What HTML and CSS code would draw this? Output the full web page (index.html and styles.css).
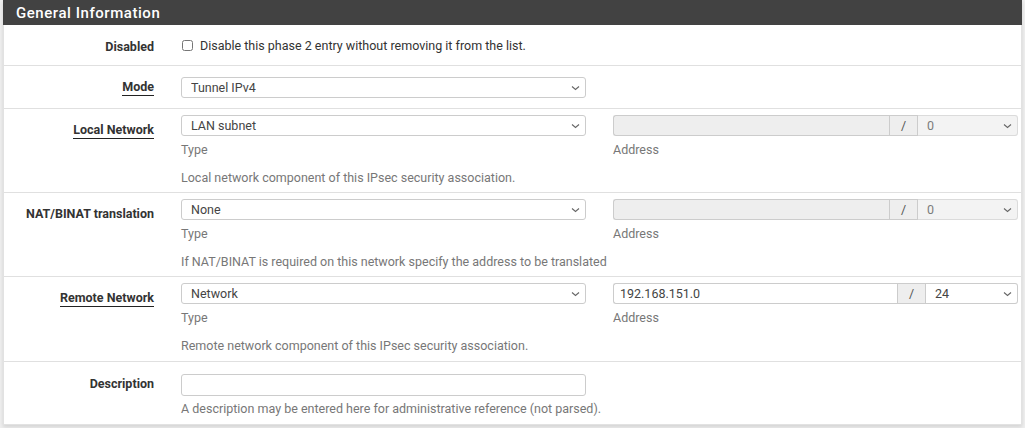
FILE: index.html
```html
<!DOCTYPE html>
<html lang="en">
<head>
    <meta charset="UTF-8">
    <meta name="viewport" content="width=device-width, initial-scale=1.0">
    <title>IPsec Phase 2</title>
    <link rel="stylesheet" href="styles.css">
</head>
<body>
    <div class="panel">
        <div class="panel-heading">General Information</div>
        <div class="panel-body">
            <div class="form-group row-disabled">
                <div class="label-col"><span class="lbl">Disabled</span></div>
                <div class="field-col wide">
                    <label class="chk"><input type="checkbox"> Disable this phase 2 entry without removing it from the list.</label>
                </div>
            </div>

            <div class="form-group row-mode">
                <div class="label-col"><span class="lbl required">Mode</span></div>
                <div class="field-col">
                    <div class="sel">
                        <select class="form-control"><option>Tunnel IPv4</option></select>
                        <svg class="caret" width="9" height="6" viewBox="0 0 9 6"><path d="M1 1.5 L4.5 4.5 L8 1.5" fill="none" stroke="#666" stroke-width="1.1"/></svg>
                    </div>
                </div>
            </div>

            <div class="form-group net">
                <div class="label-col"><span class="lbl required">Local Network</span></div>
                <div class="field-col">
                    <div class="sel">
                        <select class="form-control"><option>LAN subnet</option></select>
                        <svg class="caret" width="9" height="6" viewBox="0 0 9 6"><path d="M1 1.5 L4.5 4.5 L8 1.5" fill="none" stroke="#666" stroke-width="1.1"/></svg>
                    </div>
                    <div class="help">Type</div>
                </div>
                <div class="field-col">
                    <div class="input-group">
                        <input class="form-control addr" type="text" disabled>
                        <span class="addon">/</span>
                        <div class="sel mask">
                            <select class="form-control" disabled><option>0</option></select>
                            <svg class="caret" width="9" height="6" viewBox="0 0 9 6"><path d="M1 1.5 L4.5 4.5 L8 1.5" fill="none" stroke="#666" stroke-width="1.1"/></svg>
                        </div>
                    </div>
                    <div class="help">Address</div>
                </div>
                <div class="help note">Local network component of this IPsec security association.</div>
            </div>

            <div class="form-group net">
                <div class="label-col"><span class="lbl">NAT/BINAT translation</span></div>
                <div class="field-col">
                    <div class="sel">
                        <select class="form-control"><option>None</option></select>
                        <svg class="caret" width="9" height="6" viewBox="0 0 9 6"><path d="M1 1.5 L4.5 4.5 L8 1.5" fill="none" stroke="#666" stroke-width="1.1"/></svg>
                    </div>
                    <div class="help">Type</div>
                </div>
                <div class="field-col">
                    <div class="input-group">
                        <input class="form-control addr" type="text" disabled>
                        <span class="addon">/</span>
                        <div class="sel mask">
                            <select class="form-control" disabled><option>0</option></select>
                            <svg class="caret" width="9" height="6" viewBox="0 0 9 6"><path d="M1 1.5 L4.5 4.5 L8 1.5" fill="none" stroke="#666" stroke-width="1.1"/></svg>
                        </div>
                    </div>
                    <div class="help">Address</div>
                </div>
                <div class="help note">If NAT/BINAT is required on this network specify the address to be translated</div>
            </div>

            <div class="form-group net remote">
                <div class="label-col"><span class="lbl required">Remote Network</span></div>
                <div class="field-col">
                    <div class="sel">
                        <select class="form-control"><option>Network</option></select>
                        <svg class="caret" width="9" height="6" viewBox="0 0 9 6"><path d="M1 1.5 L4.5 4.5 L8 1.5" fill="none" stroke="#666" stroke-width="1.1"/></svg>
                    </div>
                    <div class="help">Type</div>
                </div>
                <div class="field-col">
                    <div class="input-group">
                        <input class="form-control addr" type="text" value="192.168.151.0">
                        <span class="addon">/</span>
                        <div class="sel mask narrow">
                            <select class="form-control"><option>24</option></select>
                            <svg class="caret" width="9" height="6" viewBox="0 0 9 6"><path d="M1 1.5 L4.5 4.5 L8 1.5" fill="none" stroke="#666" stroke-width="1.1"/></svg>
                        </div>
                    </div>
                    <div class="help">Address</div>
                </div>
                <div class="help note">Remote network component of this IPsec security association.</div>
            </div>

            <div class="form-group last">
                <div class="label-col"><span class="lbl">Description</span></div>
                <div class="field-col">
                    <input class="form-control" type="text">
                    <div class="help">A description may be entered here for administrative reference (not parsed).</div>
                </div>
            </div>
        </div>
    </div>
</body>
</html>
```

FILE: styles.css
```css
html, body {
    margin: 0;
    padding: 0;
}
body {
    font-family: Roboto, "Liberation Sans", sans-serif;
    font-size: 12.5px;
    color: #333;
    background: #efefef;
    padding: 0 3px;
    height: 428px;
    overflow: hidden;
}
.panel {
    background: #fff;
    border: 1px solid #e2e2e2;
    border-top: 0;
    box-shadow: 0 2px 4px rgba(0, 0, 0, 0.12);
}
.panel-heading {
    background: #424242;
    color: #fff;
    font-size: 15px;
    font-weight: 500;
    letter-spacing: 0.55px;
    height: 25px;
    line-height: 26px;
    padding-left: 13px;
    margin: 0 -1px;
}
.form-group {
    display: flex;
    flex-wrap: wrap;
    border-bottom: 1px solid #e0e0e0;
    padding: 6px 0 6px;
    column-gap: 27px;
}
.form-group.remote {
    padding-bottom: 7px;
}
.form-group.last {
    border-bottom: 0;
    padding: 12px 0 7px;
}
.row-disabled {
    height: 27px;
    padding: 7px 0 6px;
    align-items: center;
}
.row-mode {
    padding: 11px 0 10px;
}
.label-col {
    width: 150px;
    text-align: right;
    font-weight: bold;
    padding-top: 2px;
}
.net .label-col {
    padding-top: 7px;
}
.lbl.required {
    border-bottom: 1px solid #222;
    padding-bottom: 1px;
}
.field-col {
    width: 405px;
}
.field-col.wide {
    width: auto;
}
.chk {
    display: flex;
    align-items: center;
    gap: 7px;
    color: #333;
}
.chk input {
    margin: 0 0 0 1px;
    width: 11px;
    height: 11px;
}
.form-control {
    box-sizing: border-box;
    width: 100%;
    height: 21px;
    border: 1px solid #ccc;
    border-radius: 3px;
    font-family: inherit;
    font-size: 12.5px;
    color: #444;
    padding: 0 6px;
    background-color: #fff;
    margin: 0;
}
.last .form-control {
    height: 22px;
}
.sel {
    position: relative;
}
.sel select {
    appearance: none;
    -webkit-appearance: none;
    padding: 0 20px 0 9px;
}
.caret {
    position: absolute;
    right: 6px;
    top: 8px;
    pointer-events: none;
}
.input-group {
    display: flex;
}
.input-group .addr {
    flex: 1;
    border-radius: 3px 0 0 3px;
    border-right: 0;
}
.form-control:disabled {
    background: #eee;
}
.addon {
    width: 29px;
    height: 21px;
    box-sizing: border-box;
    border: 1px solid #ccc;
    background: #eee;
    color: #555;
    text-align: center;
    line-height: 19px;
}
.sel.mask {
    width: 100px;
    flex: none;
}
.sel.mask.narrow {
    width: 92px;
}
.sel.mask select {
    border-left: 0;
    border-radius: 0 3px 3px 0;
}
.help {
    color: #777;
    margin-top: 5px;
    line-height: 17px;
}
.help.note {
    margin-left: 177px;
    margin-top: 11px;
    width: 100%;
}
.last .help {
    margin-top: 4px;
    white-space: nowrap;
}
```
